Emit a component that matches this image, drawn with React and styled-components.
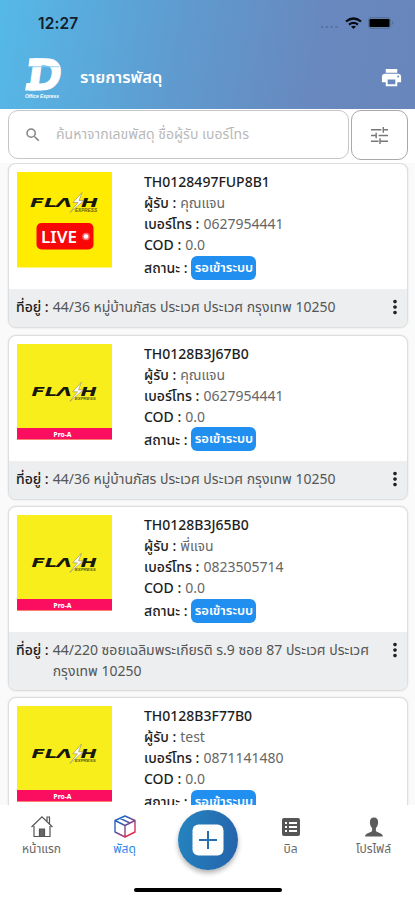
import React from 'react';
import styled, { createGlobalStyle } from 'styled-components';
import { MdPrint, MdSearch, MdMoreVert } from 'react-icons/md';

const GlobalStyle = createGlobalStyle`
  * {
    box-sizing: border-box;
  }
  body {
    margin: 0;
    background: #fafafa;
    font-family: 'Noto Sans', 'Noto Sans Thai', 'Open Sans', sans-serif;
  }
`;

const Screen = styled.div`
  width: 415px;
  height: 900px;
  display: flex;
  flex-direction: column;
  overflow: hidden;
`;

const Header = styled.header`
  flex: none;
  height: 109px;
  background: linear-gradient(100deg, #55b9e8 0%, #5f9bcf 42%, #6888bf 76%, #6886bb 100%);
`;

const StatusBar = styled.div`
  height: 46px;
  padding: 0 20px 0 38px;
  display: flex;
  align-items: center;
  justify-content: space-between;
`;

const Clock = styled.span`
  font: 600 15.5px Inter, sans-serif;
  letter-spacing: 0.1px;
  color: #12202e;
`;

const TitleBar = styled.div`
  height: 63px;
  padding: 0 12px 0 23px;
  display: flex;
  align-items: center;
`;

const Title = styled.h1`
  flex: 1;
  margin: 0 0 0 17px;
  font-size: 16.4px;
  font-weight: 600;
  color: #fff;
`;

const SearchRow = styled.div`
  flex: none;
  height: 54px;
  padding: 1px 7px 3px 8px;
  display: flex;
  gap: 2px;
  background: #fff;
`;

const SearchBox = styled.div`
  width: 341px;
  height: 49px;
  padding-left: 15px;
  display: flex;
  align-items: center;
  gap: 14px;
  border: 1px solid #c6c6c6;
  border-radius: 10px;
  color: #858585;
`;

const Placeholder = styled.span`
  font-size: 14px;
  color: #b9b9b9;
`;

const FilterButton = styled.button`
  width: 57px;
  height: 50px;
  padding: 0;
  display: flex;
  align-items: center;
  justify-content: center;
  border: 1px solid #a9a9a9;
  border-radius: 10px;
  background: #fff;
`;

const List = styled.main`
  flex: 1;
  min-height: 0;
  padding: 0 7px 0 8px;
  display: flex;
  flex-direction: column;
  gap: 6.5px;
  overflow: hidden;
`;

const Card = styled.article`
  flex: none;
  border: 1px solid #dcdedf;
  border-radius: 8px;
  background: #fff;
  overflow: hidden;
  box-shadow: 0 0 2px rgba(0, 0, 0, 0.12);
`;

const CardBody = styled.div`
  height: 125px;
  padding: 7px 8px;
  display: flex;
  gap: 31px;
  svg {
    margin-top: 1px;
  }
`;

const Details = styled.div`
  font-size: 14px;
  line-height: 21px;
  color: #666;
`;

const Line = styled.div`
  height: 21px;
  display: flex;
  align-items: center;
  gap: 4px;
  white-space: nowrap;
`;

const StatusLine = styled(Line)`
  height: 25px;
`;

const Label = styled.span`
  font-weight: 500;
  color: #1d1d1d;
`;

const Badge = styled.span`
  width: 65px;
  height: 24px;
  line-height: 23px;
  border-radius: 6px;
  background: #218ff0;
  color: #fff;
  font-size: 13px;
  font-weight: 600;
  text-align: center;
`;

const Address = styled.div`
  min-height: 38px;
  padding: 7px 1px 8.5px 7px;
  display: flex;
  gap: 4px;
  background: #eceeef;
  font-size: 14px;
  line-height: 21px;
  color: #555;
`;

const AddressText = styled.span`
  flex: 1;
`;

const More = styled(MdMoreVert)`
  flex: none;
  color: #222;
`;

const TabBar = styled.nav`
  flex: none;
  height: 95px;
  display: grid;
  grid-template-columns: repeat(5, 1fr);
  grid-template-rows: 78px 17px;
  background: #fff;
`;

const Tab = styled.div`
  padding-top: 9px;
  display: flex;
  flex-direction: column;
  align-items: center;
  font-size: 12px;
  line-height: 18px;
  color: ${p => (p.$active ? '#2c86ec' : '#686868')};
`;

const AddButton = styled.button`
  justify-self: center;
  width: 60px;
  height: 60px;
  margin-top: 5px;
  padding: 0;
  display: flex;
  align-items: center;
  justify-content: center;
  border: 0;
  border-radius: 50%;
  background: linear-gradient(100deg, #2585bf, #2562ab);
  box-shadow: 0 3px 5px rgba(0, 0, 0, 0.3);
`;

const HomeIndicator = styled.div`
  grid-column: 1 / -1;
  justify-self: center;
  width: 148px;
  height: 4px;
  margin-top: 5px;
  border-radius: 2px;
  background: #000;
`;

const LogoSvg = styled.svg`
  overflow: visible;
`;

const BrandLogo = () => (
  <LogoSvg width="40" height="46" viewBox="0 0 40 46">
    <text x="8" y="35" transform="skewX(-8)" textLength="34" lengthAdjust="spacingAndGlyphs"
      fontFamily="DejaVu Sans" fontWeight="700" fontSize="43" fill="#fff" stroke="#fff" strokeWidth="1">D</text>
    <path d="M6.500 3.200h9l-.8 8H5.500zM3.500 28h9v7.500H2z" fill="#fff" />
    <path d="M5 11.700h31" stroke="#8ccbed" strokeWidth=".9" />
    <text x="2" y="43" textLength="34" lengthAdjust="spacingAndGlyphs" fontFamily="Liberation Sans"
      fontWeight="700" fontStyle="italic" fontSize="5" fill="#fff">Office Express</text>
  </LogoSvg>
);

const StatusIcons = () => (
  <svg width="75" height="16" viewBox="0 0 75 16">
    <path d="M1 12h17" stroke="#56749f" strokeWidth="2" strokeDasharray="2.2 2.6" />
    <g fill="none" stroke="#080b10" strokeWidth="2.2">
      <path d="M26 6.500q7.500-6 15 0M29 9.600q4.500-3.500 9 0" />
    </g>
    <path d="M31 11.500q2.500-1.600 5 0L33.500 14z" fill="#080b10" />
    <rect x="48.500" y="2.500" width="22" height="11" rx="2.500" fill="#6383ad" stroke="#53729e" />
    <rect x="49.500" y="4" width="20" height="8" rx="1.200" fill="#000" />
    <path d="M72 6q3 2 0 4z" fill="#53729e" />
  </svg>
);

const TuneIcon = () => (
  <svg width="19" height="19" viewBox="0 0 20 20" fill="none" stroke="#777" strokeWidth="1.500">
    <path d="M1 4h11M14 4h5M14 1v6M1 10h5M9 10h10M6.500 7v6M1 16h8M11 16h8M10.500 13v6" />
  </svg>
);

const flashLettering = {
  fontFamily: 'DejaVu Sans',
  fontWeight: 700,
  fontStyle: 'italic',
  fontSize: 12,
  fill: '#17170b',
  lengthAdjust: 'spacingAndGlyphs'
};

const FlashMark = ({ x = 0, y, scale = 1 }) => (
  <g transform={`translate(${x} ${y}) scale(${scale})`}>
    <text {...flashLettering} x="13" y="9" textLength="27">FL</text>
    <text {...flashLettering} x="39" y="9" textLength="16">Λ</text>
    <text {...flashLettering} x="64" y="9" textLength="17">H</text>
    <path d="M65-5L56 5l5 0-8 10L67 3h-5z" fill="#fff" stroke="#8c8960" strokeWidth=".6" />
    <text x="58" y="14" textLength="22" lengthAdjust="spacingAndGlyphs" fontFamily="Liberation Sans"
      fontWeight="700" fontStyle="italic" fontSize="4.500" fill="#5f5a16">EXPRESS</text>
  </g>
);

const CourierLogo = ({ live }) => (
  <svg width="96" height="96" viewBox="0 0 96 96" fontFamily="Noto Sans">
    <rect width="95" height="95.500" fill={live ? '#ffec00' : '#f8ee1b'} />
    <FlashMark x={live ? 0 : 2} y={live ? 25.5 : 43} scale={live ? 1 : 0.96} />
    {live ? (
      <>
        <rect x="19.500" y="51" width="57" height="26.500" rx="5" fill="#f90606" />
        <text x="24" y="70.500" textLength="36" lengthAdjust="spacingAndGlyphs" fontSize="16" fontWeight="600" fill="#fff">LIVE</text>
        <circle cx="69" cy="64.500" r="3.800" fill="#ff6b6b" />
        <circle cx="69" cy="64.500" r="2.200" fill="#fff" />
      </>
    ) : (
      <>
        <rect y="84" width="95" height="11.500" fill="#fb0d5f" />
        <text x="36.500" y="92.500" textLength="18" lengthAdjust="spacingAndGlyphs" fontSize="6.500" fontWeight="800" fill="#fff">Pro-A</text>
      </>
    )}
  </svg>
);

const HomeIcon = () => (
  <svg width="24" height="26" viewBox="0 0 24 26" fill="none" stroke="#555" strokeWidth="1.200">
    <path d="M1.500 13L12 2.800 22.500 13M4 12v10.500h16V12M17 7V3h2.500v6.500" />
    <path d="M9.500 15h5v7.500h-5z" fill="#666" />
  </svg>
);

const BoxIcon = () => (
  <svg width="24" height="26" viewBox="0 0 24 26" fill="none" stroke="url(#box)" strokeWidth="1.400" strokeLinejoin="round">
    <defs>
      <linearGradient id="box" gradientUnits="userSpaceOnUse" x1="2" y1="3" x2="22" y2="22">
        <stop offset=".3" stopColor="#2863be" />
        <stop offset=".85" stopColor="#e52b4b" />
      </linearGradient>
    </defs>
    <path d="M12 2l10 4.500v11.500l-10 5-10-5V6.500zM2 6.500l10 5 10-5M12 11.500v11.500M7 4.300l10 4.700" />
  </svg>
);

const BillIcon = () => (
  <svg width="24" height="26" viewBox="0 0 24 26">
    <rect x="3" y="4" width="18" height="18" rx="2" fill="#555" />
    <path d="M6 9h2M6 13h2M6 17h2M10 9h8M10 13h8M10 17h8" stroke="#fff" strokeWidth="1.800" />
  </svg>
);

const ProfileIcon = () => (
  <svg width="24" height="26" viewBox="0 -1 24 26" fill="#5c5c5c">
    <path d="M12 2.500c3 0 4.300 2 4.100 5-.1 2.300-1 4.500-2.200 5.400v3.200c1 1.700 6.600 1.600 7.100 5.400H3c.5-3.800 6.100-3.700 7.100-5.400v-3.200C8.900 12 8 9.800 7.900 7.500c-.2-3 1.100-5 4.100-5z" />
  </svg>
);

const PlusIcon = () => (
  <svg width="32" height="32" viewBox="0 0 32 32">
    <rect x=".5" y=".5" width="31" height="31" rx="6" fill="#fff" />
    <path d="M16 7v18M7 16h18" stroke="#2870b2" strokeWidth="2" />
  </svg>
);

const parcels = [
  { code: 'TH0128497FUP8B1', name: 'คุณแจน', phone: '0627954441', live: true, address: '44/36 หมู่บ้านภัสร ประเวศ ประเวศ กรุงเทพ 10250' },
  { code: 'TH0128B3J67B0', name: 'คุณแจน', phone: '0627954441', address: '44/36 หมู่บ้านภัสร ประเวศ ประเวศ กรุงเทพ 10250' },
  { code: 'TH0128B3J65B0', name: 'พี่แจน', phone: '0823505714', address: '44/220 ซอยเฉลิมพระเกียรติ ร.9 ซอย 87 ประเวศ ประเวศ กรุงเทพ 10250' },
  { code: 'TH0128B3F77B0', name: 'test', phone: '0871141480' }
];

const Parcel = ({ parcel }) => (
  <Card>
    <CardBody>
      <CourierLogo live={parcel.live} />
      <Details>
        <Line><Label>{parcel.code}</Label></Line>
        <Line><Label>ผู้รับ :</Label>{parcel.name}</Line>
        <Line><Label>เบอร์โทร :</Label>{parcel.phone}</Line>
        <Line><Label>COD :</Label>0.0</Line>
        <StatusLine><Label>สถานะ :</Label><Badge>รอเข้าระบบ</Badge></StatusLine>
      </Details>
    </CardBody>
    {parcel.address && (
      <Address>
        <Label>ที่อยู่ :</Label>
        <AddressText>{parcel.address}</AddressText>
        <More size={22} />
      </Address>
    )}
  </Card>
);

export default function App() {
  return (
    <Screen>
      <GlobalStyle />
      <Header>
        <StatusBar>
          <Clock>12:27</Clock>
          <StatusIcons />
        </StatusBar>
        <TitleBar>
          <BrandLogo />
          <Title>รายการพัสดุ</Title>
          <MdPrint size={23} color="#fff" />
        </TitleBar>
      </Header>
      <SearchRow>
        <SearchBox>
          <MdSearch size={18} />
          <Placeholder>ค้นหาจากเลขพัสดุ ชื่อผู้รับ เบอร์โทร</Placeholder>
        </SearchBox>
        <FilterButton><TuneIcon /></FilterButton>
      </SearchRow>
      <List>
        {parcels.map(parcel => <Parcel key={parcel.code} parcel={parcel} />)}
      </List>
      <TabBar>
        <Tab><HomeIcon />หน้าแรก</Tab>
        <Tab $active><BoxIcon />พัสดุ</Tab>
        <AddButton><PlusIcon /></AddButton>
        <Tab><BillIcon />บิล</Tab>
        <Tab><ProfileIcon />โปรไฟล์</Tab>
        <HomeIndicator />
      </TabBar>
    </Screen>
  );
}
